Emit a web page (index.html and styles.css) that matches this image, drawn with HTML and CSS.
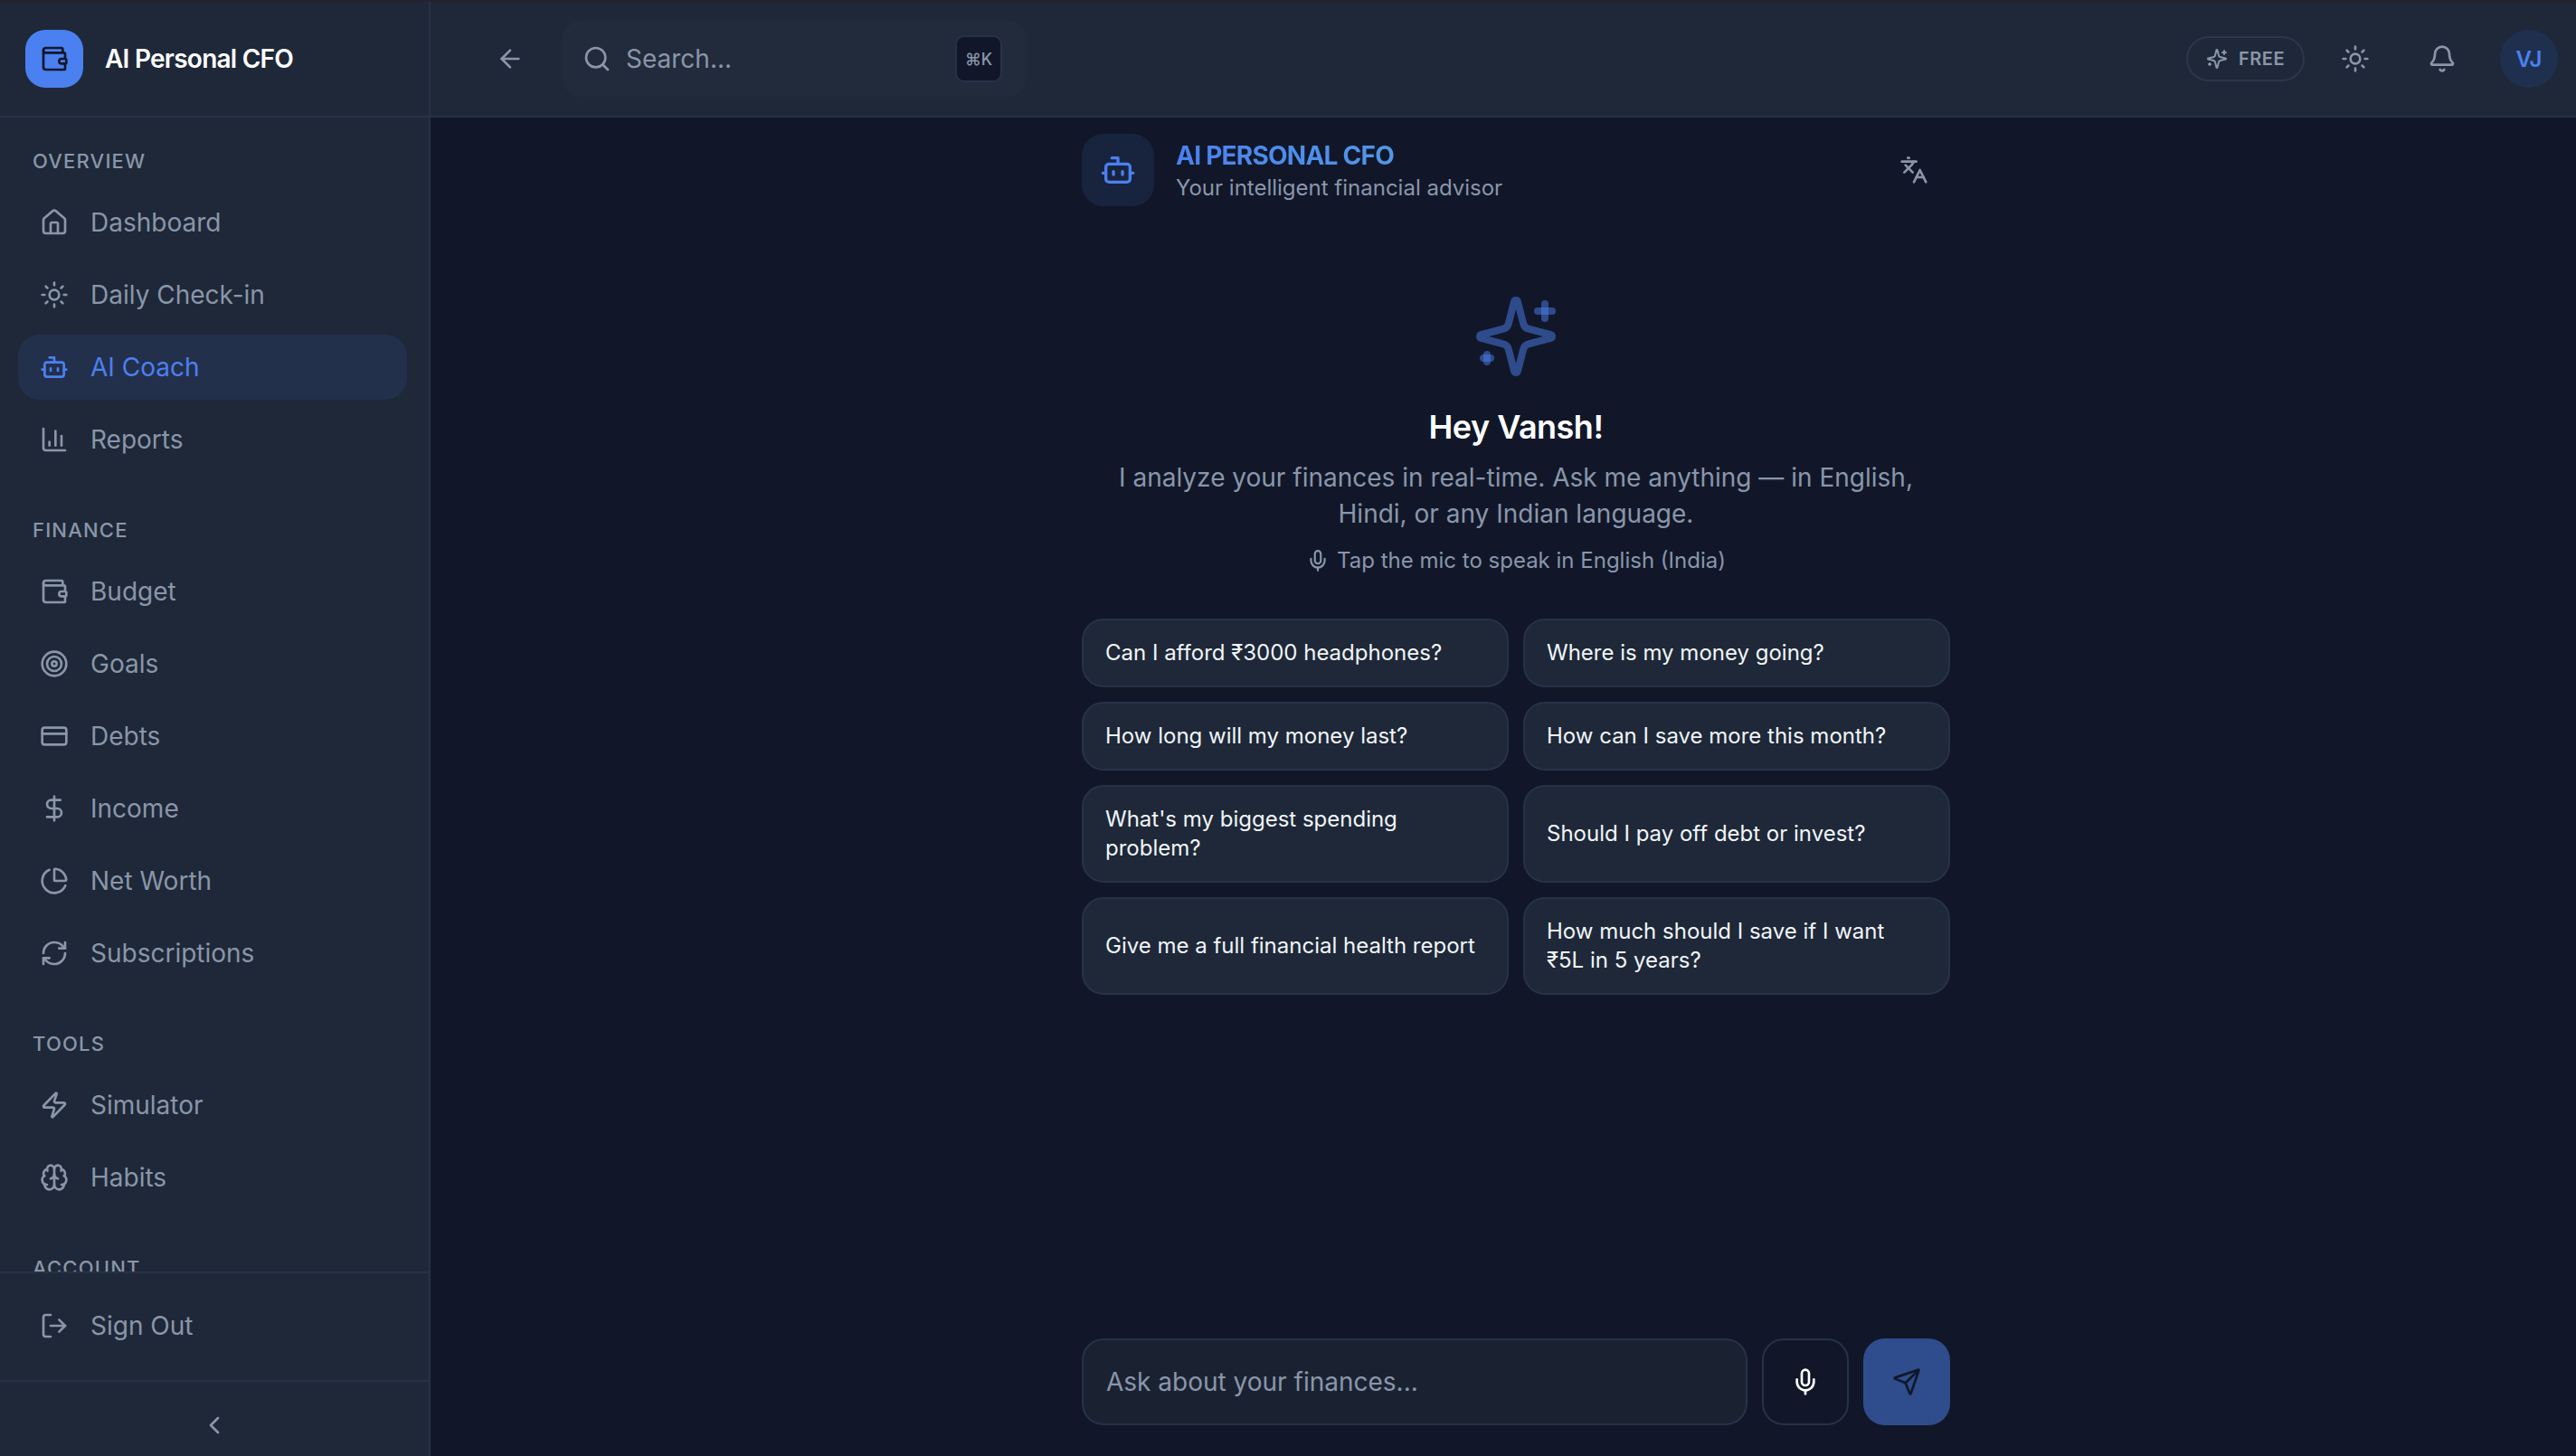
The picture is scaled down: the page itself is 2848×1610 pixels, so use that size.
FILE: index.html
```html
<!DOCTYPE html>
<html lang="en">
<head>
    <meta charset="UTF-8">
    <meta name="viewport" content="width=device-width, initial-scale=1.0">
    <title>AI Personal CFO</title>
    <link rel="stylesheet" href="styles.css">
</head>
<body>
    <svg class="sprite" width="0" height="0">
        <symbol id="i-wallet" viewBox="0 0 24 24"><path d="M19 7V4a1 1 0 0 0-1-1H5a2 2 0 0 0 0 4h15a1 1 0 0 1 1 1v4h-3a2 2 0 0 0 0 4h3a1 1 0 0 0 1-1v-2a1 1 0 0 0-1-1"/><path d="M3 5v14a2 2 0 0 0 2 2h15a1 1 0 0 0 1-1v-4"/></symbol>
        <symbol id="i-home" viewBox="0 0 24 24"><path d="M15 21v-8a1 1 0 0 0-1-1h-4a1 1 0 0 0-1 1v8"/><path d="M3 10a2 2 0 0 1 .709-1.528l7-5.999a2 2 0 0 1 2.582 0l7 5.999A2 2 0 0 1 21 10v9a2 2 0 0 1-2 2H5a2 2 0 0 1-2-2z"/></symbol>
        <symbol id="i-sun" viewBox="0 0 24 24"><circle cx="12" cy="12" r="4"/><path d="M12 2v2M12 20v2M4.93 4.93l1.41 1.41M17.66 17.66l1.41 1.41M2 12h2M20 12h2M6.34 17.66l-1.41 1.41M19.07 4.93l-1.41 1.41"/></symbol>
        <symbol id="i-bot" viewBox="0 0 24 24"><path d="M12 8V4H8"/><rect width="16" height="12" x="4" y="8" rx="2"/><path d="M2 14h2M20 14h2M15 13v2M9 13v2"/></symbol>
        <symbol id="i-chart" viewBox="0 0 24 24"><path d="M3 3v16a2 2 0 0 0 2 2h16"/><path d="M18 17V9M13 17V5M8 17v-3"/></symbol>
        <symbol id="i-target" viewBox="0 0 24 24"><circle cx="12" cy="12" r="10"/><circle cx="12" cy="12" r="6"/><circle cx="12" cy="12" r="2"/></symbol>
        <symbol id="i-card" viewBox="0 0 24 24"><rect width="20" height="14" x="2" y="5" rx="2"/><path d="M2 10h20"/></symbol>
        <symbol id="i-dollar" viewBox="0 0 24 24"><path d="M12 2v20"/><path d="M17 5H9.5a3.5 3.5 0 0 0 0 7h5a3.5 3.5 0 0 1 0 7H6"/></symbol>
        <symbol id="i-pie" viewBox="0 0 24 24"><path d="M21 12c.552 0 1.005-.449.95-.998a10 10 0 0 0-8.953-8.951c-.55-.055-.998.398-.998.95v8a1 1 0 0 0 1 1z"/><path d="M21.21 15.89A10 10 0 1 1 8 2.83"/></symbol>
        <symbol id="i-refresh" viewBox="0 0 24 24"><path d="M3 12a9 9 0 0 1 9-9 9.75 9.75 0 0 1 6.74 2.74L21 8"/><path d="M21 3v5h-5"/><path d="M21 12a9 9 0 0 1-9 9 9.75 9.75 0 0 1-6.74-2.74L3 16"/><path d="M8 16H3v5"/></symbol>
        <symbol id="i-zap" viewBox="0 0 24 24"><path d="M4 14a1 1 0 0 1-.78-1.63l9.9-10.2a.5.5 0 0 1 .86.46l-1.92 6.02A1 1 0 0 0 13 10h7a1 1 0 0 1 .78 1.63l-9.9 10.2a.5.5 0 0 1-.86-.46l1.92-6.02A1 1 0 0 0 11 14z"/></symbol>
        <symbol id="i-brain" viewBox="0 0 24 24"><path d="M12 18V5"/><path d="M15 13a4.17 4.17 0 0 1-3-4 4.17 4.17 0 0 1-3 4"/><path d="M17.598 6.5A3 3 0 1 0 12 5a3 3 0 1 0-5.598 1.5"/><path d="M17.997 5.125a4 4 0 0 1 2.526 5.77"/><path d="M18 18a4 4 0 0 0 2-7.464"/><path d="M19.967 17.483A4 4 0 1 1 12 18a4 4 0 1 1-7.967-.517"/><path d="M6 18a4 4 0 0 1-2-7.464"/><path d="M6.003 5.125a4 4 0 0 0-2.526 5.77"/></symbol>
        <symbol id="i-logout" viewBox="0 0 24 24"><path d="M9 21H5a2 2 0 0 1-2-2V5a2 2 0 0 1 2-2h4"/><path d="m16 17 5-5-5-5"/><path d="M21 12H9"/></symbol>
        <symbol id="i-sparkles" viewBox="0 0 24 24"><path d="M9.937 15.5A2 2 0 0 0 8.5 14.063l-6.135-1.582a.5.5 0 0 1 0-.962L8.5 9.936A2 2 0 0 0 9.937 8.5l1.582-6.135a.5.5 0 0 1 .963 0L14.063 8.5A2 2 0 0 0 15.5 9.937l6.135 1.581a.5.5 0 0 1 0 .964L15.5 14.063a2 2 0 0 0-1.437 1.437l-1.582 6.135a.5.5 0 0 1-.963 0z"/><path d="M20 3v4"/><path d="M22 5h-4"/><path d="M4 17v2"/><path d="M5 18H3"/></symbol>
        <symbol id="i-mic" viewBox="0 0 24 24"><path d="M12 2a3 3 0 0 0-3 3v7a3 3 0 0 0 6 0V5a3 3 0 0 0-3-3Z"/><path d="M19 10v2a7 7 0 0 1-14 0v-2"/><path d="M12 19v3"/></symbol>
    </svg>

    <div class="app">
        <aside class="sidebar">
            <div class="brand">
                <div class="brand-logo"><svg class="icon"><use href="#i-wallet"/></svg></div>
                <span class="brand-name">AI Personal CFO</span>
            </div>
            <nav class="nav-scroll">
                <div class="nav-label">OVERVIEW</div>
                <a class="nav-item"><svg class="icon"><use href="#i-home"/></svg>Dashboard</a>
                <a class="nav-item"><svg class="icon"><use href="#i-sun"/></svg>Daily Check-in</a>
                <a class="nav-item active"><svg class="icon"><use href="#i-bot"/></svg>AI Coach</a>
                <a class="nav-item"><svg class="icon"><use href="#i-chart"/></svg>Reports</a>

                <div class="nav-label">FINANCE</div>
                <a class="nav-item"><svg class="icon"><use href="#i-wallet"/></svg>Budget</a>
                <a class="nav-item"><svg class="icon"><use href="#i-target"/></svg>Goals</a>
                <a class="nav-item"><svg class="icon"><use href="#i-card"/></svg>Debts</a>
                <a class="nav-item"><svg class="icon"><use href="#i-dollar"/></svg>Income</a>
                <a class="nav-item"><svg class="icon"><use href="#i-pie"/></svg>Net Worth</a>
                <a class="nav-item"><svg class="icon"><use href="#i-refresh"/></svg>Subscriptions</a>

                <div class="nav-label">TOOLS</div>
                <a class="nav-item"><svg class="icon"><use href="#i-zap"/></svg>Simulator</a>
                <a class="nav-item"><svg class="icon"><use href="#i-brain"/></svg>Habits</a>

                <div class="nav-label">ACCOUNT</div>
            </nav>
            <div class="sidebar-foot">
                <a class="nav-item"><svg class="icon"><use href="#i-logout"/></svg>Sign Out</a>
            </div>
            <div class="collapse-row">
                <svg class="icon" viewBox="0 0 24 24"><path d="m15 18-6-6 6-6"/></svg>
            </div>
        </aside>

        <div class="main">
            <header class="topbar">
                <svg class="icon back-icon" viewBox="0 0 24 24"><path d="m12 19-7-7 7-7"/><path d="M19 12H5"/></svg>
                <div class="search">
                    <svg class="icon" viewBox="0 0 24 24"><path d="m21 21-4.34-4.34"/><circle cx="11" cy="11" r="8"/></svg>
                    <span class="search-text">Search...</span>
                    <kbd class="kbd">⌘K</kbd>
                </div>
                <div class="topbar-right">
                    <div class="plan-pill"><svg class="icon"><use href="#i-sparkles"/></svg>FREE</div>
                    <svg class="icon top-icon"><use href="#i-sun"/></svg>
                    <svg class="icon top-icon" viewBox="0 0 24 24"><path d="M10.268 21a2 2 0 0 0 3.464 0"/><path d="M3.262 15.326A1 1 0 0 0 4 17h16a1 1 0 0 0 .74-1.673C19.41 13.956 18 12.499 18 8A6 6 0 0 0 6 8c0 4.499-1.411 5.956-2.738 7.326"/></svg>
                    <div class="avatar">VJ</div>
                </div>
            </header>

            <main class="chat">
                <div class="chat-head">
                    <div class="chat-head-icon"><svg class="icon"><use href="#i-bot"/></svg></div>
                    <div class="chat-head-text">
                        <div class="chat-title">AI PERSONAL CFO</div>
                        <div class="chat-sub">Your intelligent financial advisor</div>
                    </div>
                    <svg class="icon lang-icon" viewBox="0 0 24 24"><path d="m5 8 6 6"/><path d="m4 14 6-6 2-3"/><path d="M2 5h12"/><path d="M7 2h1"/><path d="m22 22-5-10-5 10"/><path d="M14 18h6"/></svg>
                </div>

                <div class="welcome">
                    <svg class="icon hero-icon"><use href="#i-sparkles"/></svg>
                    <h2 class="hello">Hey Vansh!</h2>
                    <p class="intro">I analyze your finances in real-time. Ask me anything — in English, Hindi, or any Indian language.</p>
                    <p class="mic-hint"><svg class="icon"><use href="#i-mic"/></svg>Tap the mic to speak in English (India)</p>
                </div>

                <div class="prompts">
                    <button class="prompt">Can I afford ₹3000 headphones?</button>
                    <button class="prompt">Where is my money going?</button>
                    <button class="prompt">How long will my money last?</button>
                    <button class="prompt">How can I save more this month?</button>
                    <button class="prompt">What's my biggest spending problem?</button>
                    <button class="prompt">Should I pay off debt or invest?</button>
                    <button class="prompt">Give me a full financial health report</button>
                    <button class="prompt">How much should I save if I want ₹5L in 5 years?</button>
                </div>

                <div class="composer">
                    <div class="composer-input">Ask about your finances...</div>
                    <button class="round-btn mic-btn"><svg class="icon"><use href="#i-mic"/></svg></button>
                    <button class="round-btn send-btn"><svg class="icon" viewBox="0 0 24 24"><path d="M14.536 21.686a.5.5 0 0 0 .937-.024l6.5-19a.496.496 0 0 0-.635-.635l-19 6.5a.5.5 0 0 0-.024.937l7.93 3.18a2 2 0 0 1 1.112 1.11z"/><path d="m21.854 2.147-10.94 10.939"/></svg></button>
                </div>
            </main>
        </div>
    </div>
</body>
</html>
```

FILE: styles.css
```css
* {
    box-sizing: border-box;
}

html, body {
    margin: 0;
    height: 100%;
}

body {
    font-family: Inter, "Liberation Sans", sans-serif;
    background-color: #111729;
    color: #fff;
    overflow: hidden;
}

.sprite {
    display: block;
    width: 0;
    height: 0;
}

.icon {
    display: block;
    flex-shrink: 0;
    fill: none;
    stroke: currentColor;
    stroke-width: 2;
    stroke-linecap: round;
    stroke-linejoin: round;
}

.app {
    display: flex;
    height: 100%;
    border-top: 2px solid #222428;
}

/* Sidebar */
.sidebar {
    width: 476px;
    flex-shrink: 0;
    display: flex;
    flex-direction: column;
    background-color: #1e2838;
    border-right: 2px solid #263248;
}

.brand {
    height: 128px;
    flex-shrink: 0;
    display: flex;
    align-items: center;
    gap: 24px;
    padding: 0 28px;
    border-bottom: 2px solid #263248;
}

.brand-logo {
    width: 64px;
    height: 64px;
    border-radius: 22px;
    background-color: #4b80f0;
    color: #111729;
    display: flex;
    align-items: center;
    justify-content: center;
}

.brand-logo .icon {
    width: 32px;
    height: 32px;
}

.brand-name {
    font-size: 28px;
    font-weight: 600;
    letter-spacing: -0.75px;
}

.nav-scroll {
    flex: 1;
    min-height: 0;
    overflow: hidden;
    padding: 32px 24px 0 20px;
}

.nav-label {
    font-size: 22px;
    font-weight: 500;
    letter-spacing: 1.2px;
    line-height: 32px;
    color: #8a96a9;
    padding-left: 16px;
    margin-bottom: 16px;
}

.nav-item + .nav-label {
    margin-top: 48px;
}

.nav-item {
    height: 72px;
    display: flex;
    align-items: center;
    gap: 24px;
    padding: 0 24px;
    margin-bottom: 8px;
    border-radius: 24px;
    font-size: 28px;
    color: #8a96a9;
}

.nav-item .icon {
    width: 32px;
    height: 32px;
}

.nav-item.active {
    background-color: #23304b;
    color: #4b80f0;
}

.sidebar-foot {
    height: 122px;
    flex-shrink: 0;
    padding: 22px 24px 0 20px;
    border-top: 2px solid #263248;
    border-bottom: 2px solid #263248;
}

.collapse-row {
    height: 82px;
    flex-shrink: 0;
    padding-top: 14px;
    display: flex;
    align-items: center;
    justify-content: center;
    color: #8a96a9;
}

.collapse-row .icon {
    width: 32px;
    height: 32px;
}

/* Main area */
.main {
    flex: 1;
    min-width: 0;
    display: flex;
    flex-direction: column;
}

.topbar {
    height: 128px;
    flex-shrink: 0;
    display: flex;
    align-items: center;
    padding: 0 20px 0 72px;
    background-color: #1e2838;
    border-bottom: 2px solid #263248;
}

.back-icon {
    width: 32px;
    height: 32px;
    color: #8a96a9;
    margin-right: 42px;
}

.search {
    width: 512px;
    height: 84px;
    display: flex;
    align-items: center;
    padding: 0 26px 0 22px;
    border-radius: 20px;
    background-color: #212b3b;
    color: #8a96a9;
}

.search .icon {
    width: 32px;
    height: 32px;
}

.search-text {
    flex: 1;
    margin-left: 16px;
    font-size: 28px;
}

.kbd {
    width: 52px;
    height: 52px;
    display: flex;
    align-items: center;
    justify-content: center;
    border: 2px solid #263248;
    border-radius: 10px;
    background-color: #111729;
    font-family: Inter, "DejaVu Sans", sans-serif;
    font-size: 18px;
    font-weight: 500;
    color: #8a96a9;
}

.topbar-right {
    margin-left: auto;
    display: flex;
    align-items: center;
}

.plan-pill {
    width: 131px;
    height: 50px;
    display: flex;
    align-items: center;
    justify-content: center;
    gap: 12px;
    border: 2px solid #2b374c;
    border-radius: 25px;
    font-size: 20px;
    font-weight: 600;
    letter-spacing: 0.5px;
    color: #8a96a9;
    margin-right: 40px;
}

.plan-pill .icon {
    width: 24px;
    height: 24px;
}

.top-icon {
    width: 32px;
    height: 32px;
    color: #8a96a9;
    margin-right: 64px;
}

.avatar {
    width: 64px;
    height: 64px;
    margin-left: -16px;
    border-radius: 50%;
    background-color: #1f304f;
    color: #4b80f0;
    display: flex;
    align-items: center;
    justify-content: center;
    font-size: 24px;
    font-weight: 600;
}

/* Chat */
.chat {
    flex: 1;
    min-height: 0;
    width: 960px;
    margin: 0 auto;
    position: relative;
    left: 14px;
    display: flex;
    flex-direction: column;
}

.chat-head {
    height: 100px;
    margin-top: 8px;
    flex-shrink: 0;
    display: flex;
    align-items: center;
    gap: 24px;
    padding-right: 24px;
}

.chat-head-icon {
    width: 80px;
    height: 80px;
    border-radius: 24px;
    background-color: #18243d;
    color: #4b80f0;
    display: flex;
    align-items: center;
    justify-content: center;
}

.chat-head-icon .icon {
    width: 40px;
    height: 40px;
}

.chat-head-text {
    flex: 1;
}

.chat-title {
    width: fit-content;
    font-size: 28px;
    font-weight: 700;
    line-height: 40px;
    letter-spacing: -0.75px;
    background: linear-gradient(90deg, #4b80f0, #5098e6);
    -webkit-background-clip: text;
    background-clip: text;
    color: transparent;
}

.chat-sub {
    font-size: 24px;
    line-height: 32px;
    color: #8a96a9;
}

.lang-icon {
    width: 32px;
    height: 32px;
    color: #8a96a9;
}

.welcome {
    display: flex;
    flex-direction: column;
    align-items: center;
    text-align: center;
    margin-top: 86px;
}

.hero-icon {
    width: 96px;
    height: 96px;
    color: rgba(75, 128, 240, 0.5);
}

.hello {
    margin: 28px 0 0;
    font-size: 36px;
    font-weight: 600;
    line-height: 48px;
    letter-spacing: -0.5px;
}

.intro {
    margin: 12px 0 0;
    font-size: 28px;
    line-height: 40px;
    color: #8a96a9;
}

.mic-hint {
    margin: 16px 0 0;
    display: flex;
    align-items: center;
    gap: 8px;
    font-size: 24px;
    line-height: 32px;
    color: #8a96a9;
}

.mic-hint .icon {
    width: 26px;
    height: 26px;
}

.prompts {
    margin-top: 48px;
    display: grid;
    grid-template-columns: 1fr 1fr;
    gap: 16px;
}

.prompt {
    padding: 20px 24px;
    background-color: #1e2838;
    border: 2px solid #263248;
    border-radius: 24px;
    font-family: inherit;
    font-size: 24px;
    line-height: 32px;
    color: #f1f5f9;
    text-align: left;
}

.composer {
    margin-top: auto;
    margin-bottom: 34px;
    display: flex;
    gap: 16px;
}

.composer-input {
    flex: 1;
    height: 96px;
    display: flex;
    align-items: center;
    padding: 0 25px;
    background-color: #1a2232;
    border: 2px solid #263248;
    border-radius: 24px;
    font-size: 28px;
    color: #8a96a9;
}

.round-btn {
    width: 96px;
    height: 96px;
    padding: 0;
    display: flex;
    align-items: center;
    justify-content: center;
    border-radius: 24px;
    border: 2px solid #263248;
    background-color: #111729;
    color: #fff;
}

.round-btn .icon {
    width: 32px;
    height: 32px;
}

.send-btn {
    border: none;
    background-color: #2f4d8c;
    color: #111729;
}
```
